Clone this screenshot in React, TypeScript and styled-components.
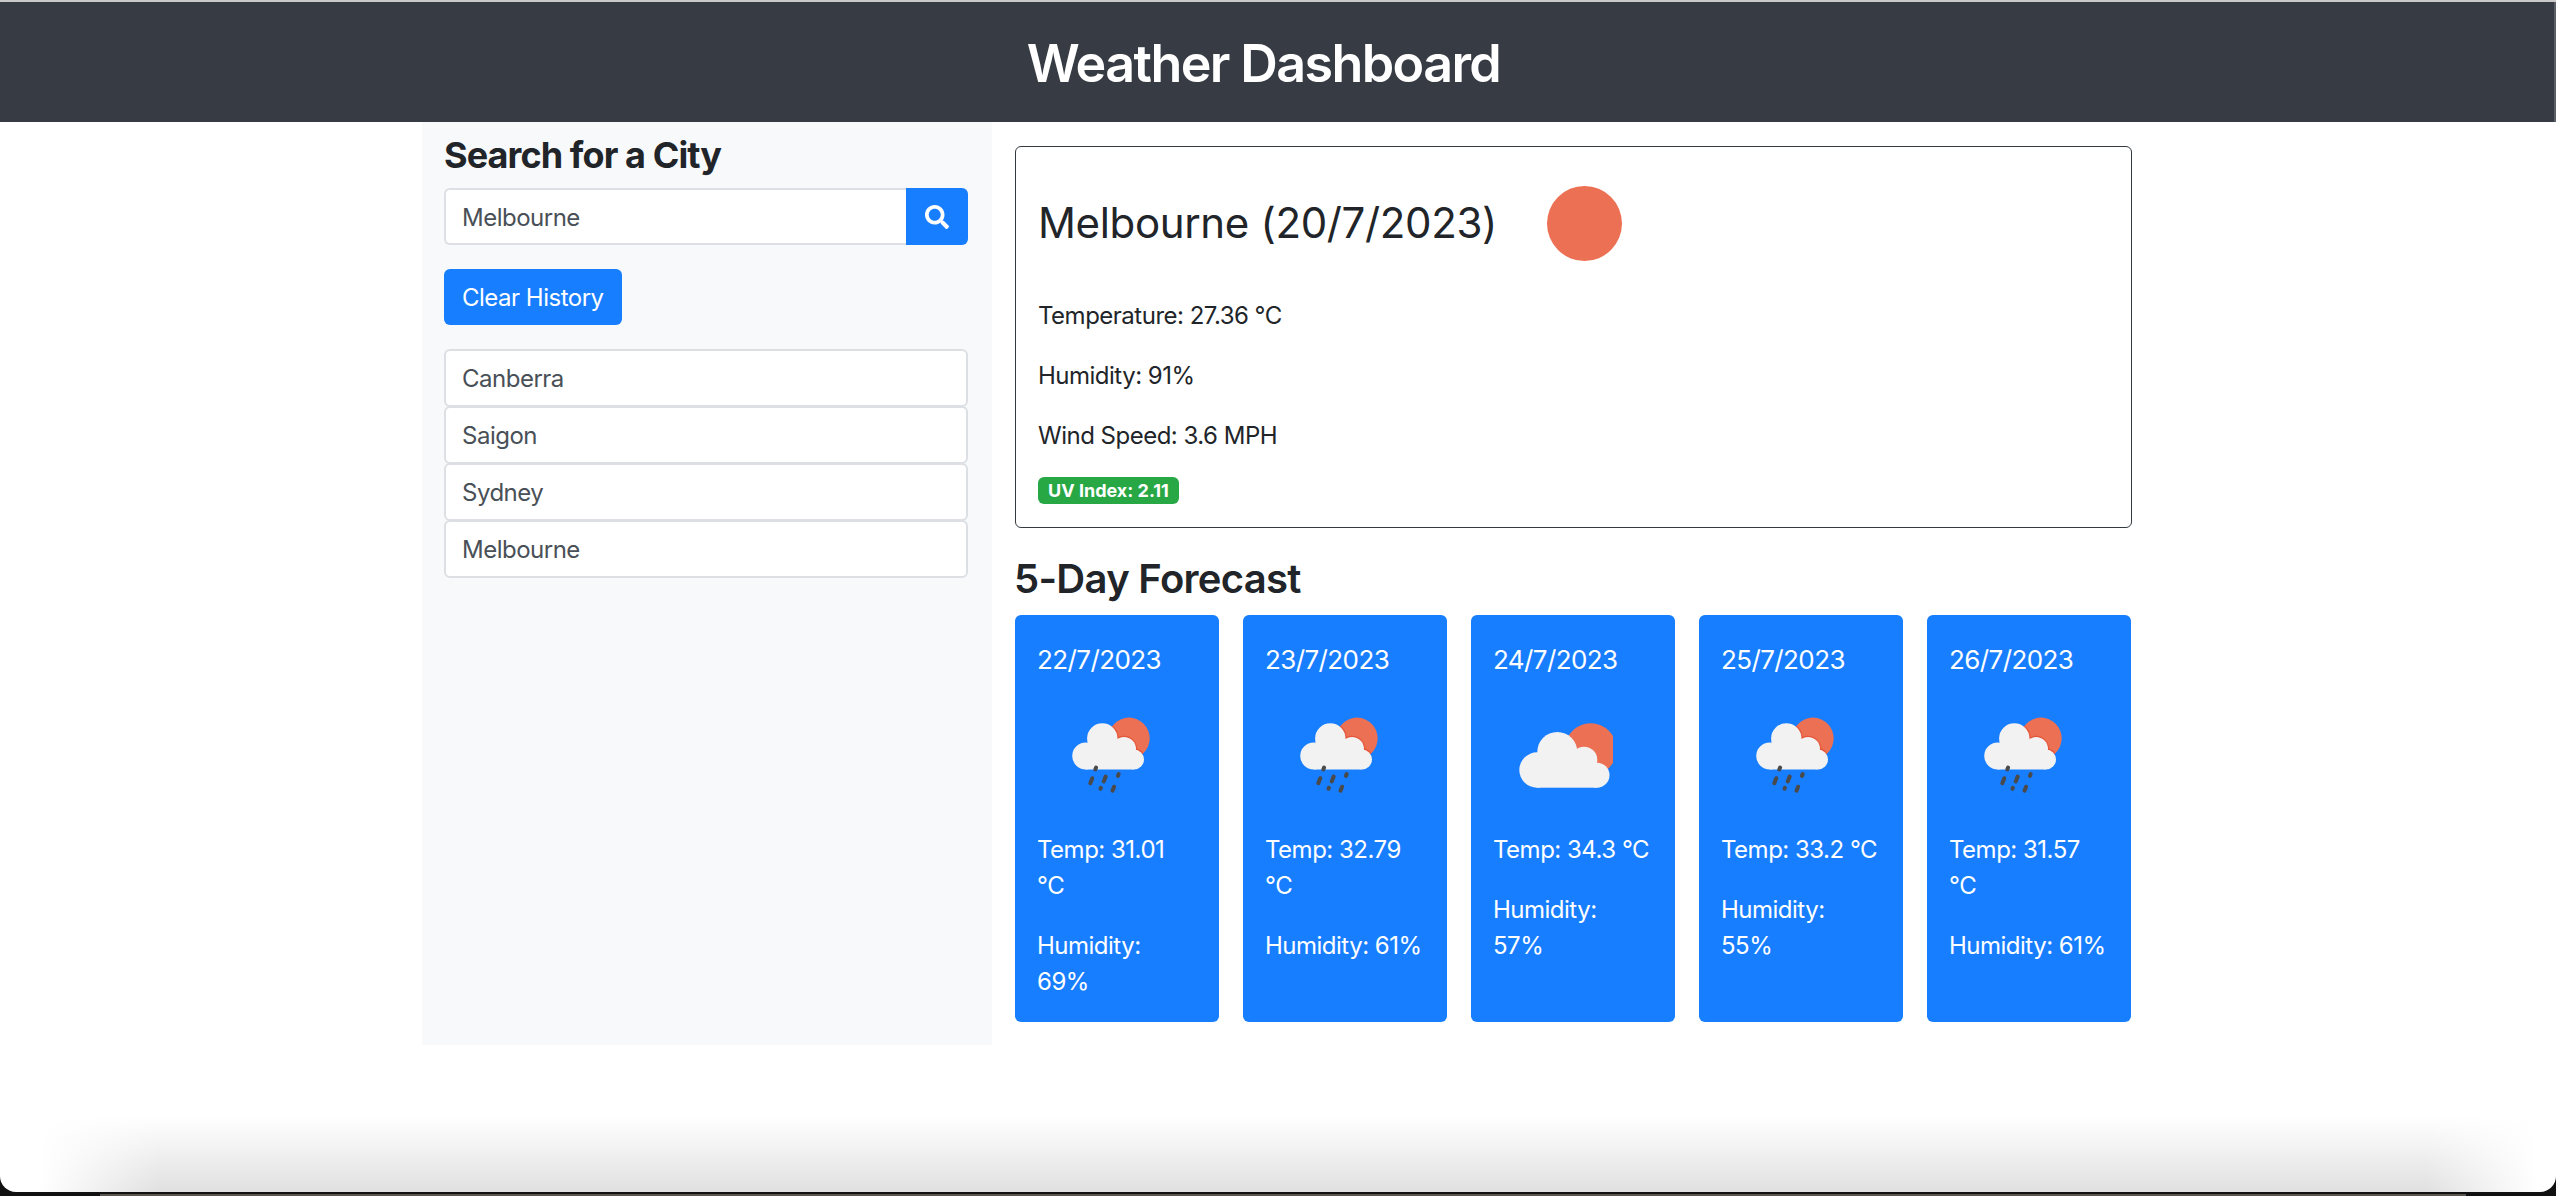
import { createGlobalStyle } from "styled-components";
import styled from "styled-components";
import { FaSearch } from "react-icons/fa";

const history = ["Canberra", "Saigon", "Sydney", "Melbourne"];

const forecast = [
    { date: "22/7/2023", temp: "31.01", humidity: "69", rain: true },
    { date: "23/7/2023", temp: "32.79", humidity: "61", rain: true },
    { date: "24/7/2023", temp: "34.3", humidity: "57", rain: false },
    { date: "25/7/2023", temp: "33.2", humidity: "55", rain: true },
    { date: "26/7/2023", temp: "31.57", humidity: "61", rain: true },
];

const drops: [number, number, number][] = [
    [58.7, 71.5, 2],
    [54.3, 83.7, 5],
    [67.7, 82, 5],
    [81.3, 78, 2],
    [63.7, 91.3, 1],
    [76.3, 91.7, 4],
];

// puffs of each cloud as cx, cy, r
const rainPuffs = [
    [48.7, 59, 13.5],
    [65.3, 41.5, 15.2],
    [87, 52, 12],
    [97, 62.5, 10],
];

const cloudPuffs = [
    [44, 73, 17.7],
    [64.3, 55, 20],
    [91, 63, 13.3],
    [104, 78.2, 12.5],
];

const RainIcon = () => (
    <Icon viewBox="0 0 120 120">
        <clipPath id="rain-sun">
            <circle cx="92" cy="41.3" r="20.7" />
        </clipPath>
        <circle cx="92" cy="41.3" r="20.7" fill="#ec7053" />
        <g clipPath="url(#rain-sun)" fill="#e4553a">
            {rainPuffs.map(([cx, cy, r], i) => (
                <circle key={i} cx={cx} cy={cy} r={r + 1.2} />
            ))}
        </g>
        <g fill="#f2f2f2">
            {rainPuffs.map(([cx, cy, r], i) => (
                <circle key={i} cx={cx} cy={cy} r={r} />
            ))}
            <rect x="48.7" y="50" width="48" height="22.5" />
        </g>
        <g stroke="#4a4a4a" strokeLinecap="round" strokeWidth="4">
            {drops.map(([x, y, len], i) => (
                <line key={i} x1={x + len * 0.2} y1={y - len / 2} x2={x - len * 0.2} y2={y + len / 2} />
            ))}
        </g>
    </Icon>
);

const CloudIcon = () => (
    <Icon viewBox="0 0 120 120">
        <circle cx="97.7" cy="52.3" r="26" fill="#ec7053" />
        <g fill="#f2f2f2">
            {cloudPuffs.map(([cx, cy, r], i) => (
                <circle key={i} cx={cx} cy={cy} r={r} />
            ))}
            <rect x="44" y="62" width="60" height="28.7" />
        </g>
    </Icon>
);

export default function App() {
    return (
        <Page>
            <Global />
            <Header>
                <Title>Weather Dashboard</Title>
            </Header>
            <Container>
                <Sidebar>
                    <SideTitle>Search for a City</SideTitle>
                    <SearchGroup>
                        <SearchInput defaultValue="Melbourne" />
                        <SearchButton aria-label="Search">
                            <FaSearch size={24} />
                        </SearchButton>
                    </SearchGroup>
                    <ClearButton>Clear History</ClearButton>
                    <HistoryList>
                        {history.map((city) => (
                            <HistoryItem key={city}>{city}</HistoryItem>
                        ))}
                    </HistoryList>
                </Sidebar>
                <Main>
                    <TodayCard>
                        <TodayHead>
                            <CityName>Melbourne (20/7/2023)</CityName>
                            <Sun />
                        </TodayHead>
                        <Stat>Temperature: 27.36 °C</Stat>
                        <Stat>Humidity: 91%</Stat>
                        <Stat>Wind Speed: 3.6 MPH</Stat>
                        <UvBadge>UV Index: 2.11</UvBadge>
                    </TodayCard>
                    <ForecastTitle>5-Day Forecast</ForecastTitle>
                    <ForecastRow>
                        {forecast.map((day) => (
                            <ForecastCard key={day.date}>
                                <ForecastDate>{day.date}</ForecastDate>
                                {day.rain ? <RainIcon /> : <CloudIcon />}
                                <ForecastText>Temp: {day.temp} °C</ForecastText>
                                <ForecastText>Humidity: {day.humidity}%</ForecastText>
                            </ForecastCard>
                        ))}
                    </ForecastRow>
                </Main>
            </Container>
            <BottomEdge />
            <BottomShade />
            <ScrollEdge />
        </Page>
    );
}

const Global = createGlobalStyle`
    html, body {
        margin: 0;
        background: #fff;
    }
    * {
        box-sizing: border-box;
    }
    body {
        font-family: Inter, "Liberation Sans", sans-serif;
        font-size: 24px;
        line-height: 36px;
        letter-spacing: -0.5px;
        color: #212529;
        overflow: hidden;
    }
`;

const Page = styled.div`
    position: relative;
    height: 1196px;
    padding: 2px 2px 0 0;
    overflow: hidden;
    &::before {
        content: "";
        position: absolute;
        top: 0;
        left: 0;
        right: 0;
        height: 2px;
        background: #c9c9c9;
    }
`;

const Header = styled.header`
    height: 120px;
    margin-right: -2px;
    background: #373b43;
    display: flex;
    align-items: center;
    justify-content: center;
    color: #fff;
`;

const Title = styled.h1`
    margin: 3px 0 0 -29px;
    font-size: 52px;
    line-height: 64px;
    font-weight: 600;
    letter-spacing: -1.6px;
`;

const Container = styled.div`
    width: 1710px;
    margin: 0 auto;
    display: flex;
`;

const Sidebar = styled.aside`
    width: 570px;
    height: 923px;
    padding: 0 24px 0 22px;
    background: #f8f9fa;
`;

const SideTitle = styled.h2`
    margin: 12px 0 11px;
    font-size: 36px;
    line-height: 43px;
    font-weight: 700;
    letter-spacing: -0.9px;
`;

const SearchGroup = styled.div`
    display: flex;
    height: 57px;
`;

const SearchInput = styled.input`
    flex: 1;
    min-width: 0;
    padding: 2px 16px 0;
    border: 2px solid #dcdfe3;
    border-right: 0;
    border-radius: 6px 0 0 6px;
    background: #fff;
    font: inherit;
    letter-spacing: inherit;
    color: #495057;
    outline: none;
`;

const SearchButton = styled.button`
    width: 62px;
    border: 0;
    border-radius: 0 6px 6px 0;
    background: #177eff;
    color: #fff;
    display: flex;
    align-items: center;
    justify-content: center;
`;

const ClearButton = styled.button`
    display: block;
    height: 56px;
    margin-top: 24px;
    padding: 1px 18px 0;
    border: 0;
    border-radius: 6px;
    background: #177eff;
    color: #fff;
    font: inherit;
    letter-spacing: inherit;
`;

const HistoryList = styled.ul`
    margin: 24px 0 0;
    padding: 0;
    list-style: none;
`;

const HistoryItem = styled.li`
    height: 58px;
    margin-bottom: -1px;
    padding: 2px 16px 0;
    border: 2px solid #dcdfe3;
    border-radius: 6px;
    background: #fff;
    color: #495057;
    display: flex;
    align-items: center;
`;

const Main = styled.main`
    width: 1140px;
    padding: 24px 0 0 23px;
`;

const TodayCard = styled.section`
    height: 382px;
    padding: 0 22px;
    border: 1px solid #343a40;
    border-radius: 6px;
`;

const TodayHead = styled.div`
    display: flex;
    align-items: center;
    height: 151px;
    padding-top: 1px;
`;

const CityName = styled.h2`
    margin: 0;
    font-size: 42px;
    line-height: 50px;
    font-weight: 400;
    letter-spacing: -0.35px;
`;

const Sun = styled.div`
    flex: none;
    width: 75px;
    height: 75px;
    margin-left: 50px;
    border-radius: 50%;
    background: #ec7053;
`;

const Stat = styled.p`
    margin: 0 0 24px;
    font-size: 24px;
    line-height: 36px;
    &:nth-of-type(3) {
        margin-bottom: 23px;
    }
`;

const UvBadge = styled.span`
    display: inline-block;
    padding: 0 10px;
    height: 27px;
    line-height: 27px;
    border-radius: 6px;
    background: #28a745;
    color: #fff;
    font-size: 18px;
    font-weight: 700;
    letter-spacing: 0;
    vertical-align: top;
`;

const ForecastTitle = styled.h3`
    margin: 28px 0 13px -1px;
    font-size: 40px;
    line-height: 46px;
    font-weight: 600;
    letter-spacing: -0.7px;
`;

const ForecastRow = styled.div`
    display: grid;
    grid-template-columns: repeat(5, 204px);
    column-gap: 24px;
`;

const ForecastCard = styled.article`
    height: 407px;
    padding: 27px 22px 0;
    border-radius: 6px;
    background: #177eff;
    color: #fff;
`;

const ForecastDate = styled.h4`
    margin: 0 0 19px;
    font-size: 26px;
    line-height: 36px;
    font-weight: 400;
    letter-spacing: -0.6px;
`;

const Icon = styled.svg`
    display: block;
    width: 120px;
    height: 120px;
    margin-bottom: 15px;
`;

const ForecastText = styled.p`
    margin: 0 0 24px;
    font-size: 24px;
    line-height: 36px;
`;

const BottomShade = styled.div`
    position: absolute;
    left: 0;
    right: 0;
    bottom: 4px;
    height: 76px;
    background:
        linear-gradient(to right, #fff 40px, rgba(255, 255, 255, 0) 160px, rgba(255, 255, 255, 0) calc(100% - 130px), #fff calc(100% - 20px)),
        linear-gradient(to bottom, rgba(0, 0, 0, 0), rgba(0, 0, 0, 0.12)),
        #fff;
    border-radius: 0 0 16px 16px;
`;

const BottomEdge = styled.div`
    position: absolute;
    left: 0;
    right: 0;
    bottom: 0;
    height: 24px;
    background: #111;
    &::after {
        content: "";
        position: absolute;
        left: 100px;
        right: 90px;
        bottom: 0;
        height: 2px;
        background: #5a554e;
    }
`;

const ScrollEdge = styled.div`
    position: absolute;
    top: 2px;
    right: 0;
    width: 2px;
    height: 120px;
    background: #5b6066;
`;
